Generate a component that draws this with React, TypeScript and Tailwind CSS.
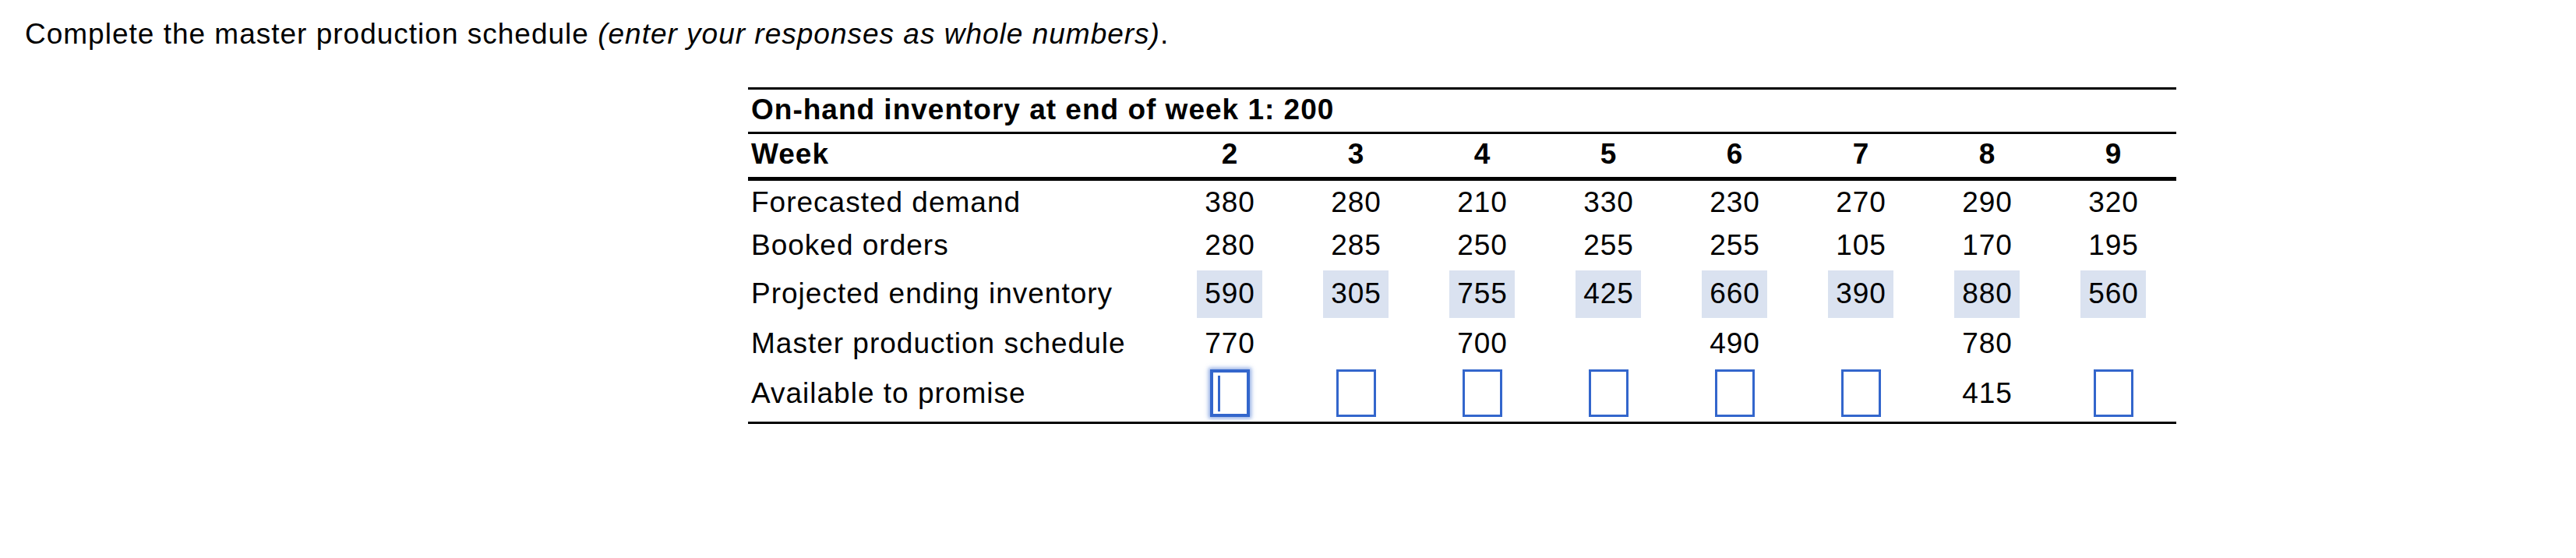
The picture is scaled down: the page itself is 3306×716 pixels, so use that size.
import type { ReactNode } from 'react'

const weeks = [2, 3, 4, 5, 6, 7, 8, 9]

type Cell = number | 'box' | 'focus' | null

const rows: { label: string; h: string; cells: Cell[]; shaded?: boolean }[] = [
  { label: 'Forecasted demand', h: 'h-[60px] border-t-[5px]', cells: [380, 280, 210, 330, 230, 270, 290, 320] },
  { label: 'Booked orders', h: 'h-[56px]', cells: [280, 285, 250, 255, 255, 105, 170, 195] },
  { label: 'Projected ending inventory', h: 'h-[68px]', cells: [590, 305, 755, 425, 660, 390, 880, 560], shaded: true },
  { label: 'Master production schedule', h: 'h-[60px]', cells: [770, null, 700, null, 490, null, 780, null] },
  { label: 'Available to promise', h: 'h-[70px] pb-[3px]', cells: ['focus', 'box', 'box', 'box', 'box', 'box', 415, 'box'] },
]

function Value({ cell, shaded }: { cell: Cell; shaded?: boolean }): ReactNode {
  if (cell === null) return null
  if (cell === 'box') {
    return <div className="w-[51px] h-[61px] border-[3px] border-[#3366cc] bg-white" />
  }
  if (cell === 'focus') {
    return (
      <div className="w-[51px] h-[61px] border-[4px] border-[#3366cc] bg-white shadow-[0_0_5px_2px_rgba(51,102,204,0.55)] flex items-center pl-[6px]">
        <div className="w-[3px] h-[46px] bg-[#3366cc]" />
      </div>
    )
  }
  if (shaded) {
    return (
      <div className="w-[84px] h-[61px] bg-[#dae2f0] flex items-center justify-center pl-[1px]">{cell}</div>
    )
  }
  return <span className="pl-[1px]">{cell}</span>
}

export default function App(): ReactNode {
  return (
    <div className="w-[3306px] h-[716px] bg-white text-black font-['Liberation_Sans',Arial,sans-serif] text-[37px] leading-[42px] tracking-[1px]">
      <p className="pt-[23px] pl-[32px]">
        Complete the master production schedule <i>(enter your responses as whole numbers)</i>.
      </p>

      <div className="ml-[960px] mt-[47px] w-[1833px] border-t-[3px] border-b-[3px] border-black">
        <div className="h-[54px] flex items-center pb-[3px] pl-[4px] font-bold">
          On-hand inventory at end of week 1: 200
        </div>
        <div className="h-[58px] border-t-[3px] border-black flex items-center pb-[3px] font-bold">
          <div className="w-[537px] pl-[4px]">Week</div>
          {weeks.map((w) => (
            <div key={w} className="w-[162px] text-center pl-[1px]">
              {w}
            </div>
          ))}
        </div>
        {rows.map((r) => (
          <div key={r.label} className={`${r.h} border-black flex items-center`}>
            <div className="w-[537px] pl-[4px]">{r.label}</div>
            {r.cells.map((c, i) => (
              <div key={i} className="w-[162px] flex justify-center">
                <Value cell={c} shaded={r.shaded} />
              </div>
            ))}
          </div>
        ))}
      </div>
    </div>
  )
}
